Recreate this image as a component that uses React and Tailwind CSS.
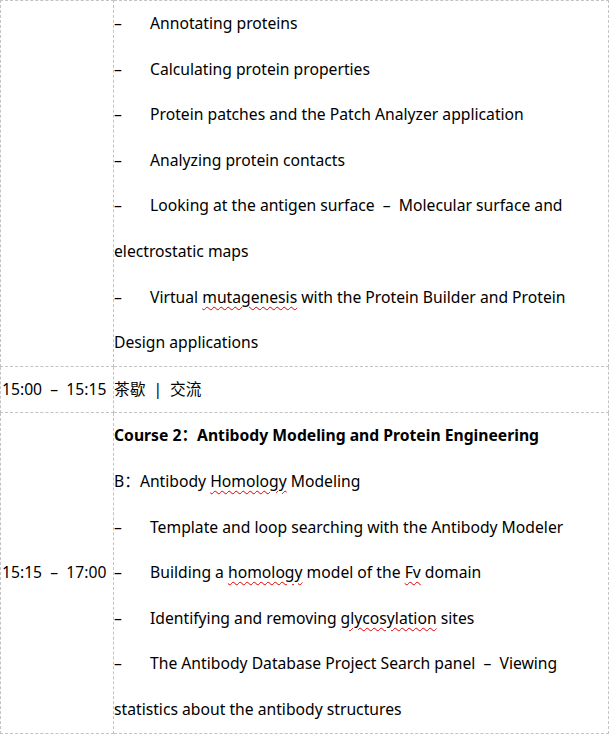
import React from "react";

const Squiggle = ({ children }) => (
    <span className="underline decoration-wavy decoration-[#e00000] decoration-1 underline-offset-[3px]">{children}</span>
);

const Item = ({ children }) => (
    <div className="whitespace-nowrap">
        <span className="inline-block w-[36px]">–</span>
        {children}
    </div>
);

const Line = ({ children, bold }) => (
    <div className={"whitespace-nowrap" + (bold ? " font-bold" : "")}>{children}</div>
);

const cell = "border border-dashed border-[#c3c3c3] p-0 align-middle";

export default function App() {
    return (
        <div className="bg-white w-[611px] h-[734px] overflow-hidden text-black text-[15.7px] leading-[45.6px]"
             style={{ fontFamily: '"Noto Sans", "Noto Sans CJK SC", sans-serif' }}>
            <table className="border-collapse w-[609px] table-fixed">
                <colgroup>
                    <col className="w-[113px]" />
                    <col />
                </colgroup>
                <tbody>
                    <tr>
                        <td className={cell + " pl-[1px]"}></td>
                        <td className={cell}>
                            <Item>Annotating proteins</Item>
                            <Item>Calculating protein properties</Item>
                            <Item>Protein patches and the Patch Analyzer application</Item>
                            <Item>Analyzing protein contacts</Item>
                            <Item>Looking at the antigen surface &nbsp;–&nbsp; Molecular surface and</Item>
                            <Line>electrostatic maps</Line>
                            <Item>Virtual <Squiggle>mutagenesis</Squiggle> with the Protein Builder and Protein</Item>
                            <Line>Design applications</Line>
                        </td>
                    </tr>
                    <tr>
                        <td className={cell + " pl-[1px] whitespace-nowrap"}>15:00 &nbsp;–&nbsp; 15:15</td>
                        <td className={cell}>
                            <Line>茶歇<span className="mx-[8px]">|</span>交流</Line>
                        </td>
                    </tr>
                    <tr>
                        <td className={cell + " pl-[1px] whitespace-nowrap"}>15:15 &nbsp;–&nbsp; 17:00</td>
                        <td className={cell}>
                            <Line bold>Course 2：Antibody Modeling and Protein Engineering</Line>
                            <Line>B：Antibody <Squiggle>Homology</Squiggle> Modeling</Line>
                            <Item>Template and loop searching with the Antibody Modeler</Item>
                            <Item>Building a <Squiggle>homology</Squiggle> model of the <Squiggle>Fv</Squiggle> domain</Item>
                            <Item>Identifying and removing <Squiggle>glycosylation</Squiggle> sites</Item>
                            <Item>The Antibody Database Project Search panel &nbsp;–&nbsp; Viewing</Item>
                            <Line>statistics about the antibody structures</Line>
                        </td>
                    </tr>
                </tbody>
            </table>
        </div>
    );
}
